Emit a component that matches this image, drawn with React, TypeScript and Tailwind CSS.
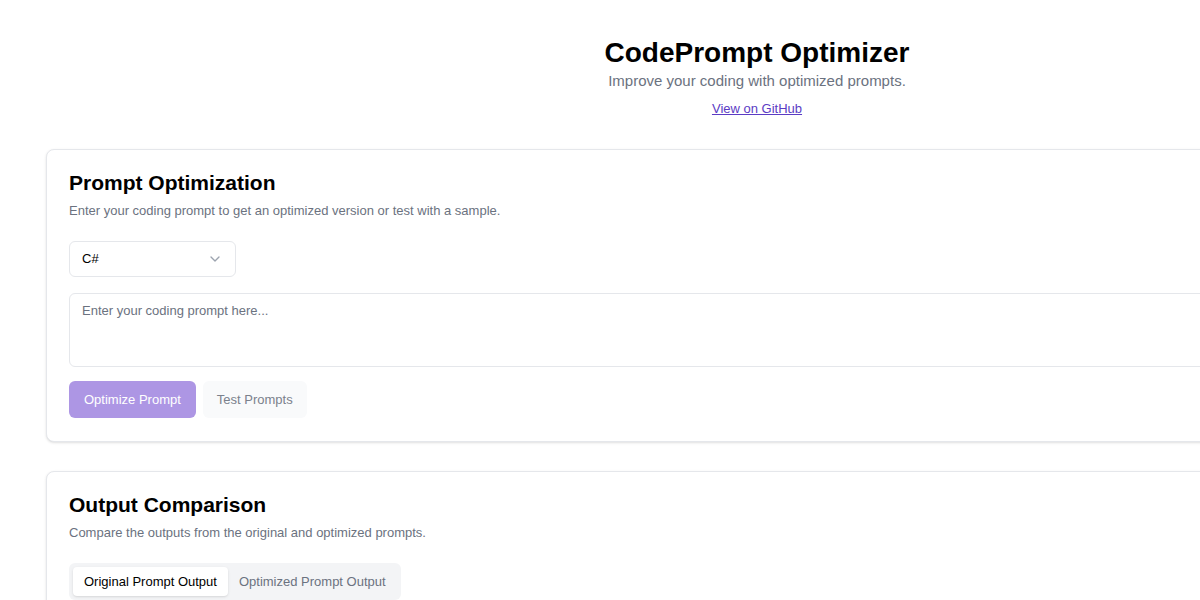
import { ChevronDown } from "lucide-react";

const font = { fontFamily: '"Liberation Sans", Arial, sans-serif' };

function Card({
  title,
  desc,
  children,
}: {
  title: string;
  desc: string;
  children: React.ReactNode;
}) {
  return (
    <section className="rounded-lg border border-[#e5e7eb] bg-white shadow-sm px-[22px] pt-[21px] pb-[23px]">
      <h2 className="text-[21px] font-bold leading-6 text-black">{title}</h2>
      <p className="mt-[6px] text-[13px] leading-5 text-[#6b7280]">{desc}</p>
      <div className="mt-[20px]">{children}</div>
    </section>
  );
}

export default function App() {
  return (
    <div className="w-full h-[600px] overflow-hidden bg-white" style={font}>
      <div className="w-[1514px] px-[46px] pt-[35px]">
        <header className="flex flex-col items-center">
          <h1 className="text-[28px] font-bold leading-9 text-black">CodePrompt Optimizer</h1>
          <p className="text-[15px] leading-5 text-[#6b7280]">
            Improve your coding with optimized prompts.
          </p>
          <a href="#" className="mt-[8px] text-[13px] leading-5 text-[#5b3cc4] underline">
            View on GitHub
          </a>
        </header>

        <main className="mt-[30px] flex flex-col gap-[29px]">
          <Card
            title="Prompt Optimization"
            desc="Enter your coding prompt to get an optimized version or test with a sample."
          >
            <button className="flex h-9 w-[167px] items-center justify-between rounded-md border border-[#e5e7eb] px-3 text-[13px] text-black">
              <span>C#</span>
              <ChevronDown className="h-4 w-4 text-[#9ca3af]" />
            </button>
            <textarea
              className="mt-4 block h-[74px] w-full resize-none rounded-md border border-[#e5e7eb] px-3 py-[7px] text-[13px] placeholder:text-[#6b7280] outline-none"
              placeholder="Enter your coding prompt here..."
            />
            <div className="mt-[14px] flex gap-[7px]">
              <button className="h-[37px] rounded-md bg-[#ad96e4] px-[15px] text-[13px] text-white">
                Optimize Prompt
              </button>
              <button className="h-[37px] rounded-md bg-[#f9fafb] px-[14px] text-[13px] text-[#7b818c]">
                Test Prompts
              </button>
            </div>
          </Card>

          <Card
            title="Output Comparison"
            desc="Compare the outputs from the original and optimized prompts."
          >
            <div className="inline-flex h-[37px] items-center rounded-md bg-[#f3f4f6] p-1">
              <button className="h-full rounded-sm bg-white px-[11px] text-[13px] text-black shadow-sm">
                Original Prompt Output
              </button>
              <button className="h-full px-[11px] text-[13px] text-[#6b7280]">
                Optimized Prompt Output
              </button>
            </div>
            <div className="h-40" />
          </Card>
        </main>
      </div>
    </div>
  );
}
